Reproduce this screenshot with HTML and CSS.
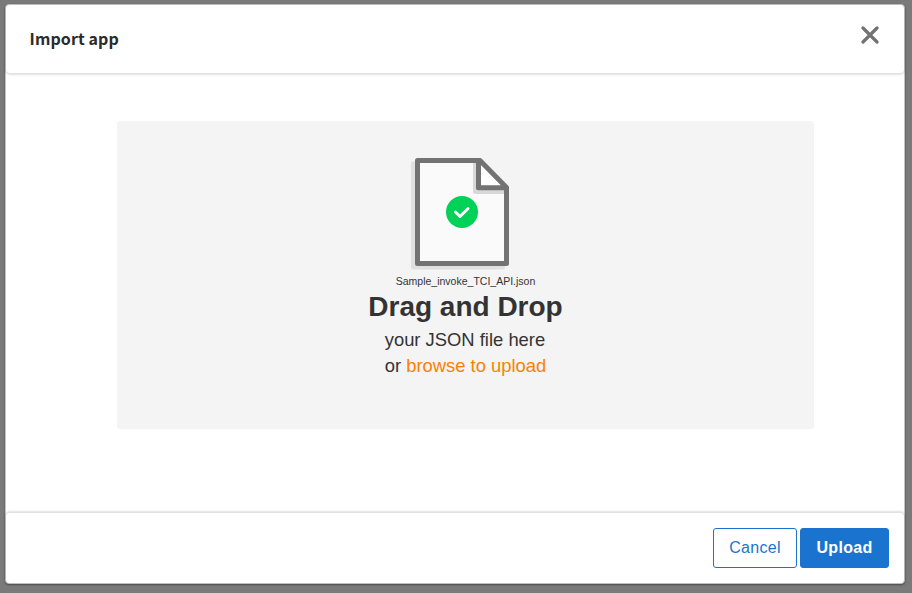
FILE: index.html
```html
<!DOCTYPE html>
<html lang="en">
<head>
<meta charset="utf-8">
<title>Import app</title>
<link rel="stylesheet" href="styles.css">
</head>
<body>
<section class="dialog" role="dialog" aria-labelledby="dialog-title">
  <header class="dialog-header">
    <h1 class="dialog-title" id="dialog-title">Import app</h1>
    <button class="close" aria-label="Close">
      <svg width="18" height="18" viewBox="0 0 18 18"><path d="M2 2L16 16M16 2L2 16" fill="none" stroke="#727272" stroke-width="3.200" stroke-linecap="round"/></svg>
    </button>
  </header>
  <main class="dialog-body">
    <div class="dropzone">
      <svg class="file-icon" width="100" height="114" viewBox="0 0 100 114">
        <path d="M4 7H70L94 32V111H4Z" fill="#e1e0e1" stroke="#e1e0e1" stroke-width="4" stroke-linejoin="round" transform="translate(-1 -.5)"/>
        <path d="M7 4H69L97 31V107H7Z" fill="#fafafa"/>
        <path d="M63 6H69V32H95V37H65Q63 37 63 35Z" fill="#d8d8d8"/>
        <path d="M68.500 4.500V31.500H96.500L70 4.500Z" fill="#fff"/>
        <path d="M7.500 3.500H70L96.500 30.500V106.500H7.500ZM68.500 3.500V30.800H96.500" fill="none" stroke="#737373" stroke-width="5" stroke-linejoin="round"/>
        <circle cx="52" cy="55" r="16" fill="#00d157"/>
        <path d="M45.500 55L50 59.500L58 51.500" fill="none" stroke="#fff" stroke-width="3" stroke-linecap="round" stroke-linejoin="round"/>
      </svg>
      <div class="file-name">Sample_invoke_TCI_API.json</div>
      <h2 class="drop-title">Drag and Drop</h2>
      <p class="drop-text">your JSON file here<br>or <a class="browse">browse to upload</a></p>
    </div>
  </main>
  <footer class="dialog-footer">
    <button class="button">Cancel</button>
    <button class="button button-primary">Upload</button>
  </footer>
</section>
</body>
</html>
```
FILE: styles.css
```css
* { box-sizing: border-box; }
body {
  margin: 0;
  height: 593px;
  padding: 4px 7px 9px 5px;
  overflow: hidden;
  background: #7a7a7a;
  color: #333;
  font-family: "Liberation Sans", Arial, sans-serif;
}
.dialog {
  display: flex;
  flex-direction: column;
  height: 580px;
  border: 1px solid #c4c4c4;
  border-radius: 4px;
  background: #fff;
  box-shadow: 0 1px 2px rgba(0, 0, 0, .4);
}
.dialog-header {
  display: flex;
  justify-content: space-between;
  height: 68px;
  padding: 21px 25px 0 23.500px;
  border-radius: 4px;
  box-shadow: 0 1px 2px 1px rgba(0, 0, 0, .12);
}
.dialog-title {
  margin: 0;
  font: 700 16px/24px "Noto Sans CJK SC", sans-serif;
  letter-spacing: .1px;
  color: #2b2b2b;
}
.close {
  width: 18px;
  height: 18px;
  padding: 0;
  border: 0;
  background: none;
}
.close svg { display: block; }
.dialog-body { flex: 1; padding: 48px 90px 0 111px; }
.dropzone {
  display: flex;
  flex-direction: column;
  align-items: center;
  height: 308px;
  padding-top: 36px;
  border-radius: 3px;
  background: #f4f4f4;
}
.file-icon { margin-right: 11px; }
.file-name { margin-top: 3px; font-size: 10.500px; line-height: 14px; }
.drop-title { margin: 1px 0 0; font-size: 28px; line-height: 36px; }
.drop-text { margin: 2px 0 0; font-size: 18.400px; line-height: 26px; }
.browse { color: #fa8200; }
.dialog-footer {
  display: flex;
  justify-content: flex-end;
  gap: 3px;
  height: 70px;
  padding: 15px 15px 0;
  border-radius: 4px;
  box-shadow: 0 -1px 2px 1px rgba(0, 0, 0, .12);
}
.button {
  width: 84px;
  height: 40px;
  padding: 0 0 1px;
  border: 1px solid #1b73d0;
  border-radius: 3px;
  background: #fff;
  color: #1b73d0;
  font: 16px "Liberation Sans", Arial, sans-serif;
  letter-spacing: .3px;
}
.button-primary { width: 89px; background: #1b73d0; color: #fff; font-weight: 700; }
```
